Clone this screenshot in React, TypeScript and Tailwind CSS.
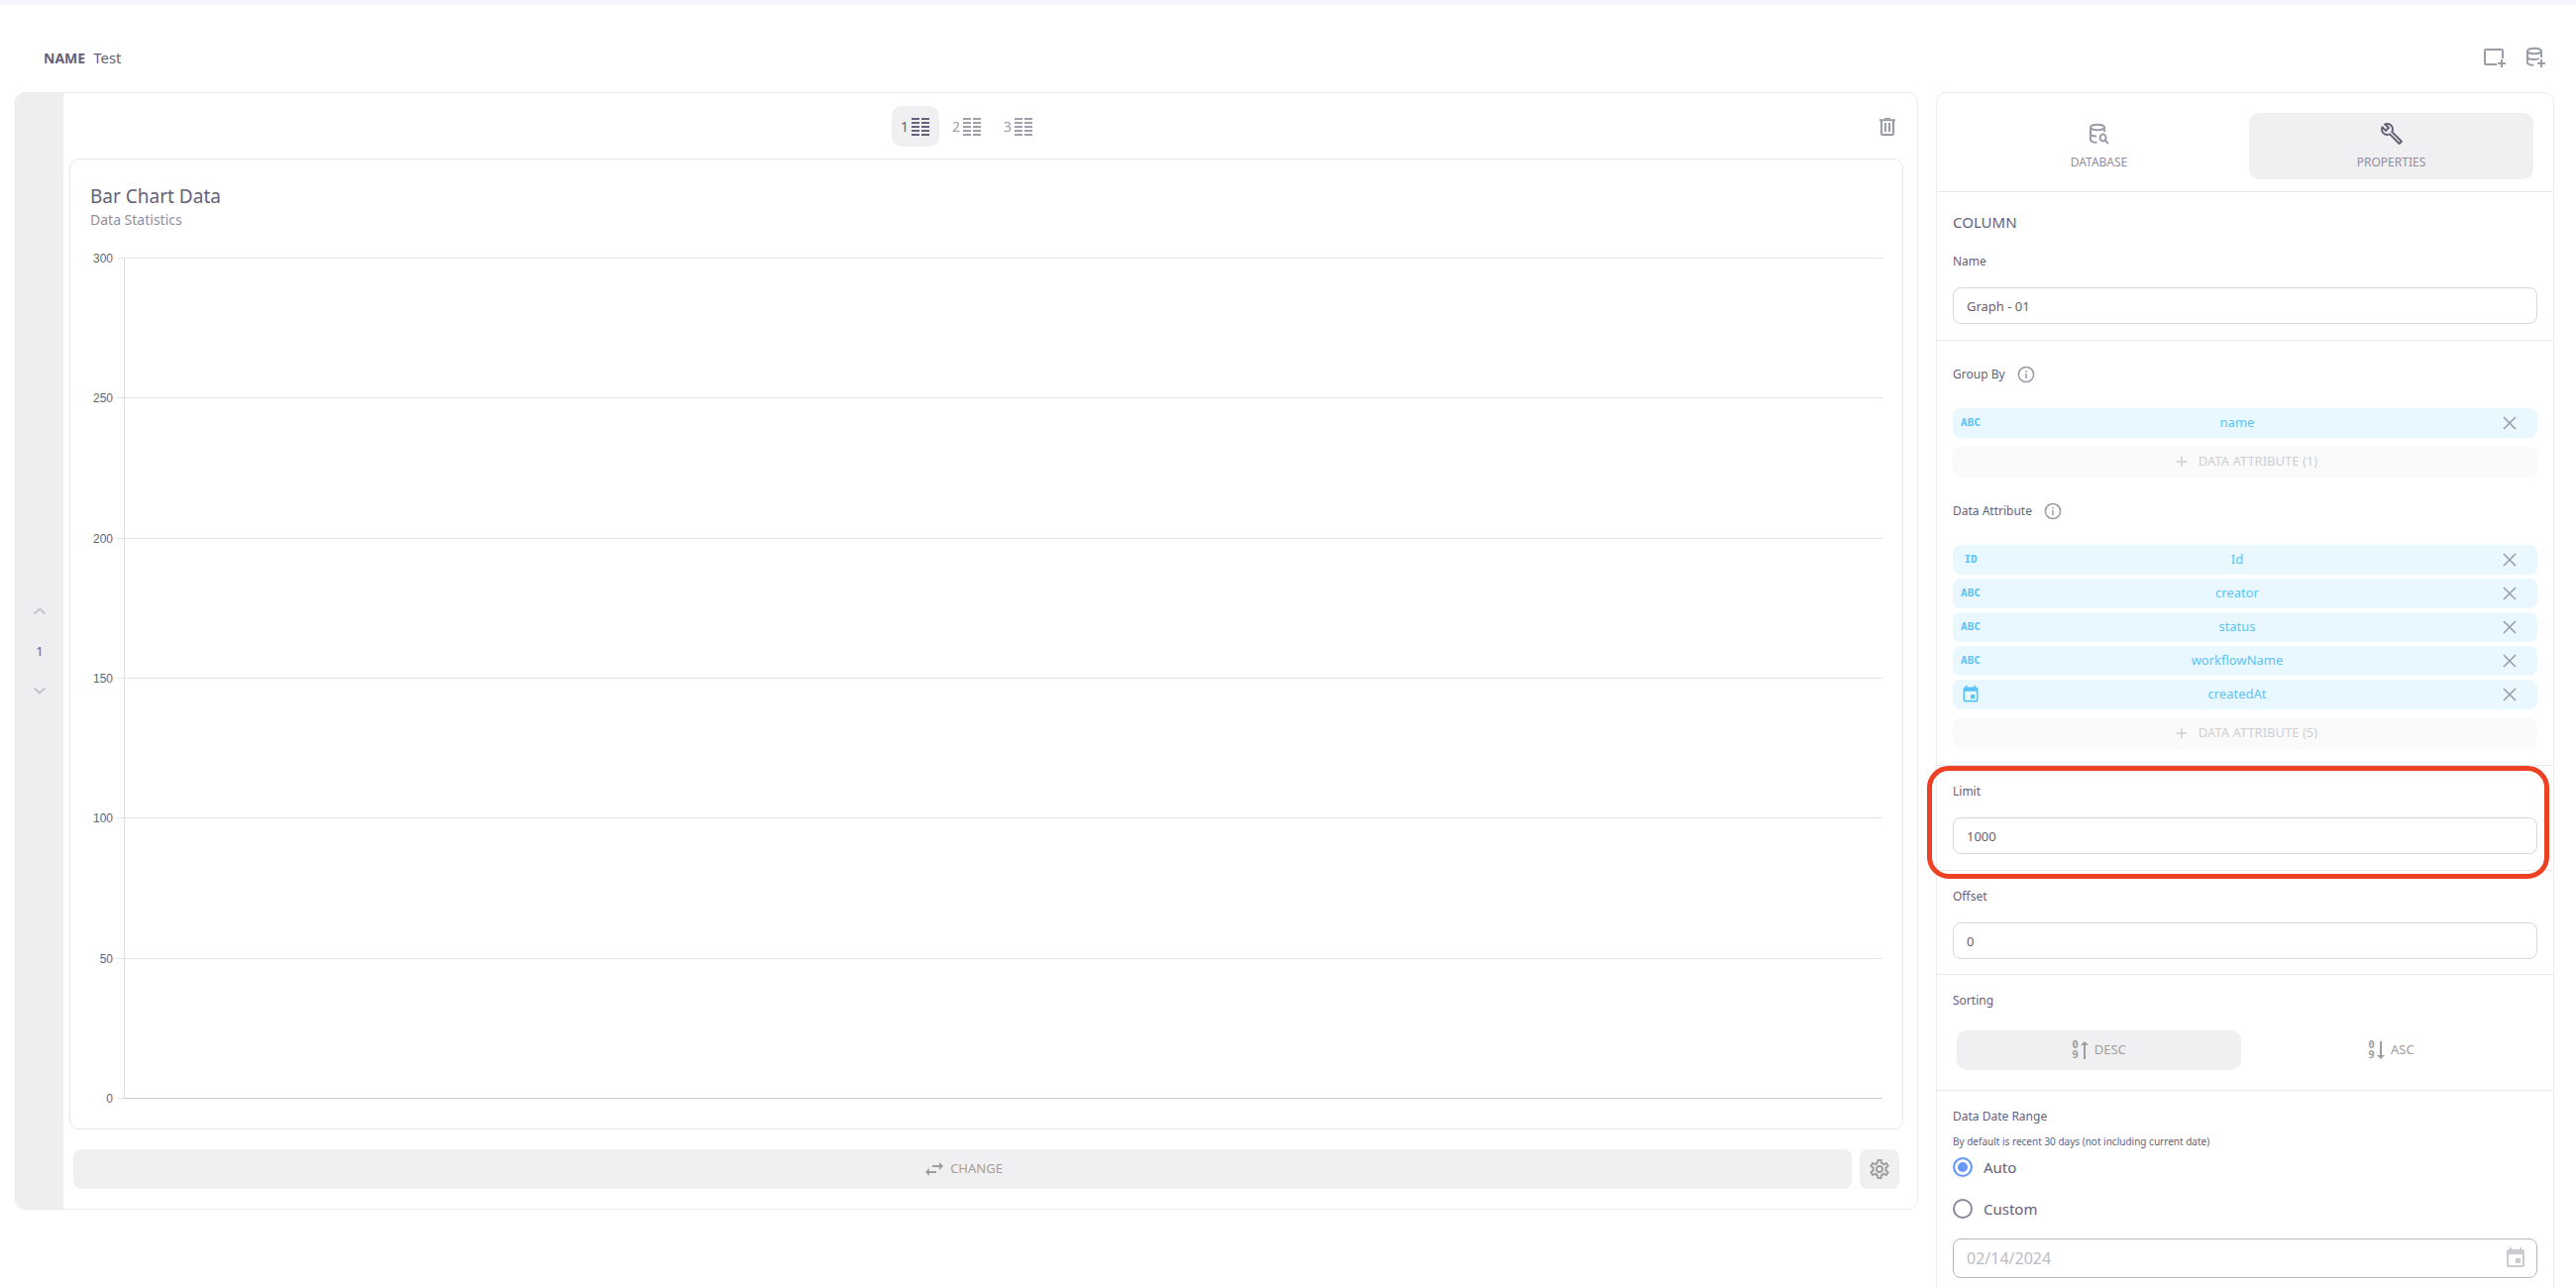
import React, { useState } from 'react';

const WRENCH =
  'M22.61,19L13.53,9.91C14.46,7.57 14,4.81 12.09,2.91C9.79,0.61 6.21,0.4 3.66,2.26L7.5,6.11L6.08,7.52L2.25,3.69C0.39,6.23 0.6,9.82 2.9,12.11C4.76,13.97 7.47,14.46 9.79,13.59L18.9,22.7C19.29,23.09 19.92,23.09 20.31,22.7L22.61,20.4C23,20 23,19.39 22.61,19M19.61,20.59L10.15,11.13C9.54,11.58 8.86,11.85 8.15,11.95C6.79,12.15 5.36,11.74 4.32,10.7C3.37,9.76 2.93,8.5 3,7.26L6.09,10.35L10.33,6.11L7.24,3C8.48,2.95 9.73,3.39 10.68,4.33C11.76,5.41 12.17,6.9 11.92,8.29C11.8,9 11.5,9.66 11.04,10.25L20.5,19.71L19.61,20.59Z';
const COG =
  'M12,8A4,4 0 0,1 16,12A4,4 0 0,1 12,16A4,4 0 0,1 8,12A4,4 0 0,1 12,8M12,10A2,2 0 0,0 10,12A2,2 0 0,0 12,14A2,2 0 0,0 14,12A2,2 0 0,0 12,10M10,22C9.75,22 9.54,21.82 9.5,21.58L9.13,18.93C8.5,18.68 7.96,18.34 7.44,17.94L4.95,18.95C4.73,19.03 4.46,18.95 4.34,18.73L2.34,15.27C2.21,15.05 2.27,14.78 2.46,14.63L4.57,12.97L4.5,12L4.57,11L2.46,9.37C2.27,9.22 2.21,8.95 2.34,8.73L4.34,5.27C4.46,5.05 4.73,4.96 4.95,5.05L7.44,6.05C7.96,5.66 8.5,5.32 9.13,5.07L9.5,2.42C9.54,2.18 9.75,2 10,2H14C14.25,2 14.46,2.18 14.5,2.42L14.87,5.07C15.5,5.32 16.04,5.66 16.56,6.05L19.05,5.05C19.27,4.96 19.54,5.05 19.66,5.27L21.66,8.73C21.79,8.95 21.73,9.22 21.54,9.37L19.43,11L19.5,12L19.43,13L21.54,14.63C21.73,14.78 21.79,15.05 21.66,15.27L19.66,18.73C19.54,18.95 19.27,19.04 19.05,18.95L16.56,17.95C16.04,18.34 15.5,18.68 14.87,18.93L14.5,21.58C14.46,21.82 14.25,22 14,22H10M11.25,4L10.88,6.61C9.68,6.86 8.62,7.5 7.85,8.39L5.44,7.35L4.69,8.65L6.8,10.2C6.4,11.37 6.4,12.64 6.8,13.8L4.68,15.36L5.43,16.66L7.86,15.62C8.63,16.5 9.68,17.14 10.87,17.38L11.24,20H12.76L13.13,17.39C14.32,17.14 15.37,16.5 16.14,15.62L18.57,16.66L19.32,15.36L17.2,13.81C17.6,12.64 17.6,11.37 17.2,10.2L19.31,8.65L18.56,7.35L16.15,8.39C15.38,7.5 14.32,6.86 13.12,6.62L12.75,4H11.25Z';
const CALENDAR =
  'M19 19H5V8H19M16 1V3H8V1H6V3H5C3.89 3 3 3.89 3 5V19C3 20.1 3.9 21 5 21H19C20.1 21 21 20.1 21 19V5C21 3.89 20.1 3 19 3H18V1M17 12H12V17H17V12Z';
const SWAP = 'M21,9L17,5V8H10V10H17V13M7,11L3,15L7,19V16H14V14H7V11Z';

function Glyph({ d, className }: { d: string; className: string }) {
  return (
    <svg viewBox="0 0 24 24" className={className} fill="currentColor" aria-hidden="true">
      <path d={d} />
    </svg>
  );
}

function Line({ d, className, width = 2 }: { d: string; className: string; width?: number }) {
  return (
    <svg viewBox="0 0 24 24" className={className} fill="none" stroke="currentColor" strokeWidth={width} aria-hidden="true">
      <path d={d} />
    </svg>
  );
}

function TableIcon() {
  return (
    <svg viewBox="0 0 18 18" className="size-[18px]" fill="currentColor" aria-hidden="true">
      {[0, 4, 8, 12, 16].map((y) => (
        <React.Fragment key={y}>
          <rect x="0" y={y} width="8" height="2" />
          <rect x="10" y={y} width="8" height="2" />
        </React.Fragment>
      ))}
    </svg>
  );
}

function TrashIcon() {
  return (
    <svg viewBox="0 0 18 18" className="size-[18px]" fill="none" stroke="currentColor" aria-hidden="true">
      <path d="M6 .8h6" strokeWidth="1.5" />
      <path d="M1 2.2h16" strokeWidth="2" />
      <path d="M3 3v13a1 1 0 0 0 1 1h10a1 1 0 0 0 1-1V3" strokeWidth="2" />
      <path d="M7 5v9M11 5v9" strokeWidth="2" />
    </svg>
  );
}

function SortIcon({ up }: { up: boolean }) {
  return (
    <span className="flex items-center gap-[2px]" aria-hidden="true">
      <span className="flex flex-col font-['DejaVu_Sans_Mono',monospace] text-[11px] leading-[10px] font-bold">
        <span>0</span>
        <span>9</span>
      </span>
      <svg viewBox="0 0 8 18" className="h-[18px] w-2" fill="currentColor">
        {up ? <path d="M3 18V4H0l4-4 4 4H5v14z" /> : <path d="M3 0v14H0l4 4 4-4H5V0z" />}
      </svg>
    </span>
  );
}

function InfoIcon() {
  return (
    <svg viewBox="0 0 18 18" className="size-[18px] text-[#9a9aa6]" fill="none" stroke="currentColor" strokeWidth="1.5" aria-hidden="true">
      <circle cx="9" cy="9" r="7.600" />
      <path d="M9 8v5M9 5v1.500" />
    </svg>
  );
}

const DB_BODY = 'M17 5.5a7 2.8 0 1 1-14 0a7 2.8 0 1 1 14 0';

function BarChart() {
  const ticks = [300, 250, 200, 150, 100, 50, 0];
  return (
    <svg className="mt-5 block h-[868px] w-full" role="img" aria-label="Bar chart, no data">
      {ticks.map((t) => {
        const y = 8.5 + Math.round(((300 - t) * 848) / 300);
        return (
          <g key={t}>
            <text x="23" y={y + 4} textAnchor="end" className="fill-[#666] font-['Liberation_Sans',sans-serif] text-[12px]">
              {t}
            </text>
            <line x1="27" x2="100%" y1={y} y2={y} stroke="#e4e4e4" />
          </g>
        );
      })}
      <line x1="34.5" x2="34.5" y1="8" y2="857" stroke="#dfdfdf" />
      <line x1="34" x2="100%" y1="856.5" y2="856.5" stroke="#c9c9c9" />
    </svg>
  );
}

function Chip({ kind, name }: { kind: string; name: string }) {
  return (
    <li className="flex h-[30px] items-center rounded-lg bg-[#e9f7fe] text-[#5cc4f5]">
      <span className="flex w-9 justify-center font-['DejaVu_Sans_Mono',monospace] text-[11px] font-bold">
        {kind === 'date' ? <Glyph d={CALENDAR} className="size-5" /> : kind}
      </span>
      <span className="flex-1 text-center text-[13px]">{name}</span>
      <button type="button" aria-label={'Remove ' + name} className="mr-1 flex w-12 justify-center text-[#969aa6]">
        <Line d="M4 4L20 20M20 4L4 20" className="size-[18px]" />
      </button>
    </li>
  );
}

function AddAttribute({ count }: { count: number }) {
  return (
    <button type="button" disabled className="mt-2 flex h-8 w-full items-center justify-center gap-2 rounded-lg bg-[#fafafa] text-[13px] text-[#cfcfd3]">
      <Line d="M12 5v14M5 12h14" className="size-[18px]" />
      DATA ATTRIBUTE ({count})
    </button>
  );
}

function Field({ id, label, value }: { id: string; label: string; value: string }) {
  return (
    <>
      <label htmlFor={id} className="block text-[12px] leading-5">
        {label}
      </label>
      <input id={id} defaultValue={value} className="mt-4 block h-[37px] w-full rounded-lg border border-[#d8d8dc] bg-white px-[13px] text-[13px] outline-none" />
    </>
  );
}

function Radio({ label, checked, onChange }: { label: string; checked: boolean; onChange: () => void }) {
  return (
    <label className="flex h-5 items-center gap-[11px] text-[15px]">
      <input
        type="radio"
        name="range"
        checked={checked}
        onChange={onChange}
        className="size-5 appearance-none rounded-full border-2 border-[#8b889b] bg-white checked:border-[#6699fb] checked:bg-[#6699fb] checked:shadow-[inset_0_0_0_3px_white]"
      />
      {label}
    </label>
  );
}

export default function App() {
  const [columns, setColumns] = useState(1);
  const [range, setRange] = useState('Auto');

  return (
    <div className="flex h-screen flex-col overflow-hidden bg-white font-['Noto_Sans',sans-serif] text-[#646179]">
      <div className="h-[5px] shrink-0 bg-[#f4f6fb]" />
      <header className="mt-10 mb-[22px] flex h-[26px] shrink-0 items-center pr-7 pl-11">
        <h1 className="text-[14px] font-bold">NAME</h1>
        <span className="ml-2 flex-1 text-[15px]">Test</span>
        <div className="flex gap-[18px] text-[#9a9ca9]">
          <button type="button" aria-label="Add panel">
            <Line d="M14 19H3a1 1 0 0 1-1-1V5a1 1 0 0 1 1-1h16a1 1 0 0 1 1 1V13M19 14v8M15 18h8" className="size-6" />
          </button>
          <button type="button" aria-label="Add database">
            <Line d={DB_BODY + 'M3 5.5V17c0 1.6 2.6 2.8 6.5 2.8M17 5.5V12M3 11.2c0 1.6 3 2.8 7 2.8c2 0 4-.4 5-1M17 14v8M13 18h8'} className="size-6" />
          </button>
        </div>
      </header>

      <div className="flex min-h-0 flex-1 items-start gap-[18px] pr-[22px] pl-[15px]">
        <main className="flex min-w-0 flex-1 overflow-hidden rounded-[10px] border border-[#ebecee]">
          <nav aria-label="Rows" className="flex w-12 shrink-0 flex-col items-center justify-center gap-[18px] bg-[#edeef0]">
            <button type="button" aria-label="Previous row" className="text-[#c3c4cb]">
              <Line d="M6.5 14.5L12 9.5L17.5 14.5" className="size-6" />
            </button>
            <span className="text-[13px] leading-5">1</span>
            <button type="button" aria-label="Next row" className="text-[#c3c4cb]">
              <Line d="M6.5 9.5L12 14.5L17.5 9.5" className="size-6" />
            </button>
          </nav>

          <div className="min-w-0 flex-1 pt-[13px] pr-[14px] pb-5 pl-[6px]">
            <div className="flex items-center gap-2">
              <div className="flex flex-1 justify-center gap-1">
                {[1, 2, 3].map((n) => (
                  <button
                    key={n}
                    type="button"
                    onClick={() => setColumns(n)}
                    aria-pressed={columns === n}
                    className={
                      'flex h-[41px] w-12 items-center justify-center gap-[3px] rounded-[10px] text-[14px] ' +
                      (columns === n ? 'bg-[#f0f0f2]' : 'text-[#9fa0ac]')
                    }
                  >
                    {n}
                    <TableIcon />
                  </button>
                ))}
              </div>
              <button type="button" aria-label="Delete" className="flex h-8 w-8 items-center justify-center text-[#999ca8]">
                <TrashIcon />
              </button>
            </div>

            <section className="mt-3 rounded-[10px] border border-[#e6e7ea] px-5 pt-[23px] pb-[19px]">
              <h2 className="text-[19px] leading-7">Bar Chart Data</h2>
              <p className="text-[14px] leading-5 text-[#908e9f]">Data Statistics</p>
              <BarChart />
            </section>

            <div className="mt-5 flex gap-2 px-1 text-[#9e9e9e]">
              <button type="button" className="flex h-10 flex-1 items-center justify-center gap-1 rounded-lg bg-[#f0f0f2] text-[13px]">
                <Glyph d={SWAP} className="size-6" />
                CHANGE
              </button>
              <button type="button" aria-label="Settings" className="flex size-10 items-center justify-center rounded-lg bg-[#f0f0f2]">
                <Glyph d={COG} className="size-6" />
              </button>
            </div>
          </div>
        </main>

        <aside className="w-[24vw] shrink-0 rounded-t-[10px] border border-[#ebecee]">
          <div className="flex gap-2 border-b border-[#e8e8eb] px-5 pt-5 pb-3 text-[12px] text-[#8f8d9e]">
            <button type="button" className="flex h-[67px] flex-1 flex-col items-center justify-center gap-2 rounded-[10px]">
              <Line
                d={DB_BODY + 'M3 5.5V18c0 1.6 2.600 2.800 6.500 2.800M17 5.500V10M3 11.800c0 1.600 2.600 2.600 6 2.800M18.600 16a3 3.400 0 1 1-6 0a3 3.400 0 1 1 6 0M17.500 18.500L21 22'}
                className="size-6 text-[#9a9ca9]"
              />
              DATABASE
            </button>
            <button type="button" aria-pressed="true" className="flex h-[67px] flex-1 flex-col items-center justify-center gap-2 rounded-[10px] bg-[#f0f0f2]">
              <Glyph d={WRENCH} className="size-6 text-[#646179]" />
              PROPERTIES
            </button>
          </div>

          <section className="border-b border-[#e8e8eb] px-4 pt-5 pb-4">
            <h2 className="mb-5 text-[15px] leading-5">COLUMN</h2>
            <Field id="column-name" label="Name" value="Graph - 01" />
          </section>

          <section className="border-b border-[#e8e8eb] px-4 pt-6 pb-4">
            <h3 className="flex h-5 items-center gap-3 text-[12px]">
              Group By
              <InfoIcon />
            </h3>
            <ul className="mt-6">
              <Chip kind="ABC" name="name" />
            </ul>
            <AddAttribute count={1} />
            <h3 className="mt-6 flex h-5 items-center gap-3 text-[12px]">
              Data Attribute
              <InfoIcon />
            </h3>
            <ul className="mt-6 flex flex-col gap-1">
              <Chip kind="ID" name="Id" />
              <Chip kind="ABC" name="creator" />
              <Chip kind="ABC" name="status" />
              <Chip kind="ABC" name="workflowName" />
              <Chip kind="date" name="createdAt" />
            </ul>
            <AddAttribute count={5} />
          </section>

          <section className="relative border-b border-[#e8e8eb] p-4">
            <Field id="limit" label="Limit" value="1000" />
            <div className="pointer-events-none absolute top-0 right-1 -bottom-[9px] -left-[10px] rounded-[22px] border-[5px] border-[#ee4023]" />
          </section>

          <section className="border-b border-[#e8e8eb] px-4 pt-4 pb-[15px]">
            <Field id="offset" label="Offset" value="0" />
          </section>

          <section className="border-b border-[#e8e8eb] px-4 pt-4 pb-5">
            <h3 className="text-[12px] leading-5">Sorting</h3>
            <div className="mt-5 flex gap-2 px-1 text-[13px] text-[#9e9e9e]">
              <button type="button" aria-pressed="true" className="flex h-10 flex-1 items-center justify-center gap-[6px] rounded-[10px] bg-[#f0f0f2]">
                <SortIcon up />
                DESC
              </button>
              <button type="button" className="flex h-10 flex-1 items-center justify-center gap-[6px] rounded-[10px]">
                <SortIcon up={false} />
                ASC
              </button>
            </div>
          </section>

          <section className="px-4 pt-4 pb-6">
            <h3 className="text-[12px] leading-5">Data Date Range</h3>
            <p className="mt-[7px] text-[10px] leading-4">By default is recent 30 days (not including current date)</p>
            <div className="mt-2 flex flex-col gap-[22px]">
              <Radio label="Auto" checked={range === 'Auto'} onChange={() => setRange('Auto')} />
              <Radio label="Custom" checked={range === 'Custom'} onChange={() => setRange('Custom')} />
            </div>
            <div className="mt-5 flex h-10 items-center rounded-lg border border-[#b6b5be] pr-[9px] pl-[13px]">
              <input aria-label="Start date" disabled defaultValue="02/14/2024" className="min-w-0 flex-1 bg-transparent text-[16px] text-[#bcbbc5]" />
              <Glyph d={CALENDAR} className="size-6 text-[#cccbd2]" />
            </div>
          </section>
        </aside>
      </div>
    </div>
  );
}
